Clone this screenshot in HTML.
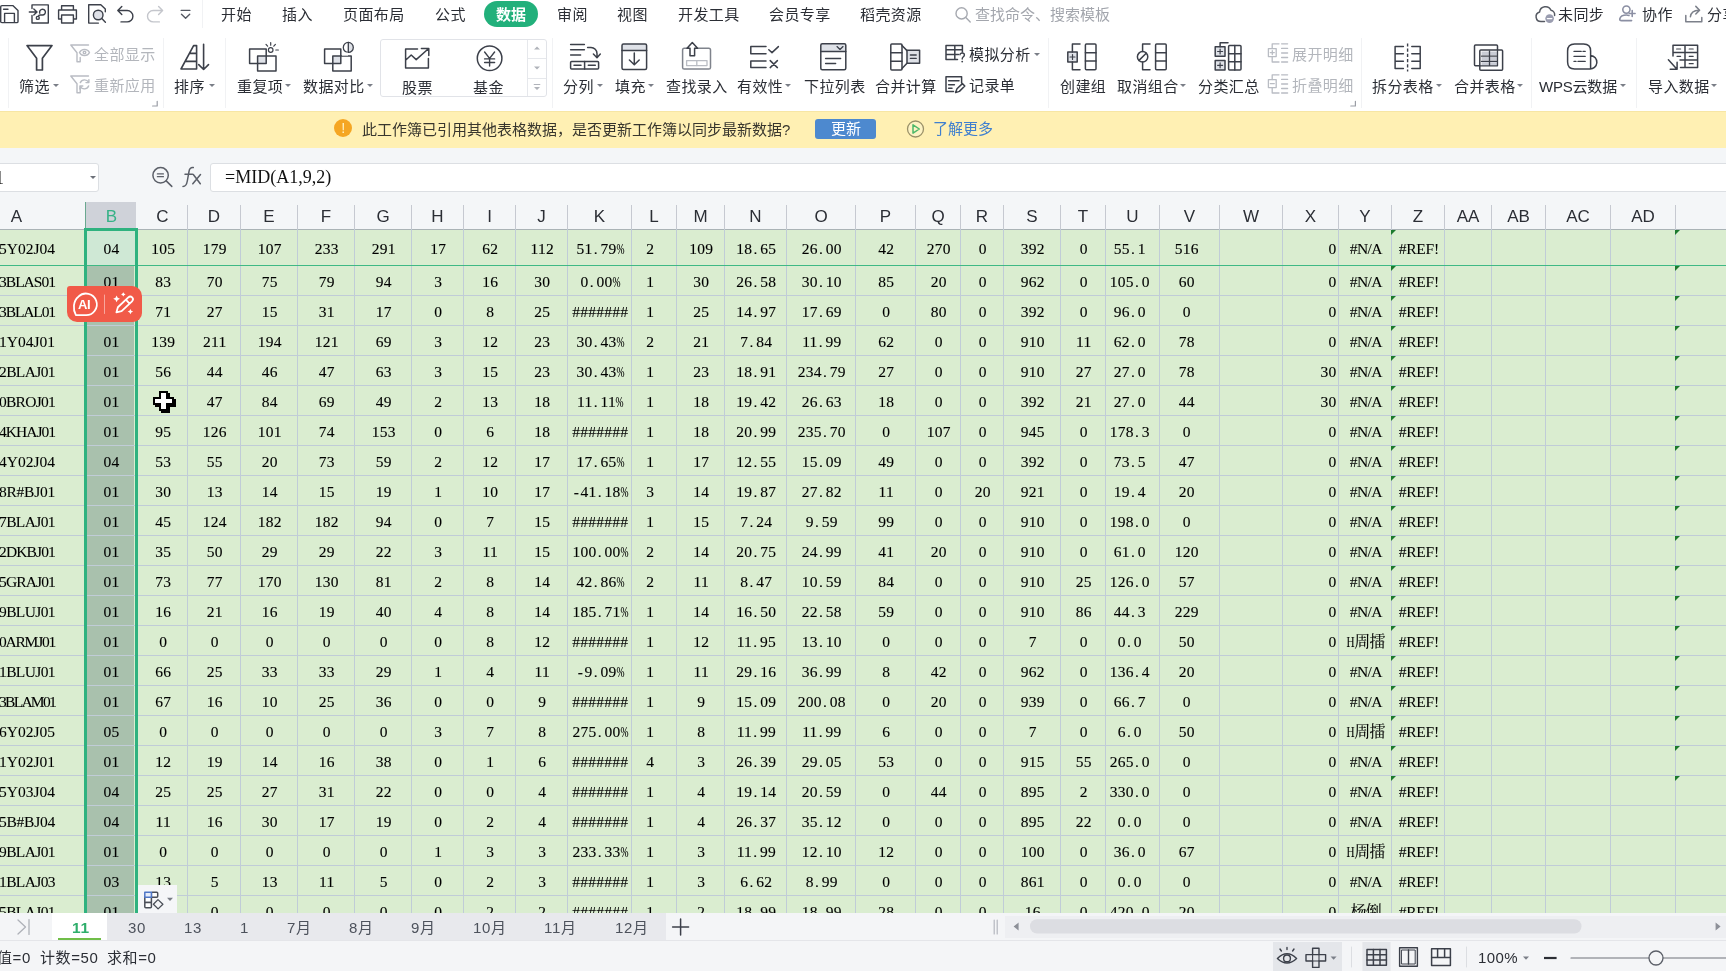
<!DOCTYPE html><html lang="zh-CN"><head><meta charset="utf-8"><title>WPS 表格</title>
<style>
*{box-sizing:border-box;margin:0;padding:0}
html,body{width:1726px;height:971px;overflow:hidden;background:#fff}
body{position:relative;font-family:"Liberation Sans","Noto Sans CJK SC",sans-serif;font-size:15px;color:#2b2e35}
.a{position:absolute;white-space:nowrap}
.t{position:absolute;white-space:nowrap;line-height:20px;height:20px;font-size:15px;color:#2b2e35}
.dis{color:#b3b6bc}
.sep{position:absolute;width:1px;background:#f1f2f4}
#root{position:absolute;left:0;top:0;width:1726px;height:971px;overflow:hidden}
.t,.r,.hd,.tab,.g{will-change:transform}
svg{position:absolute;left:0;top:0;overflow:visible}
.ar{position:absolute;width:0;height:0;border-left:3px solid transparent;border-right:3px solid transparent;border-top:3.5px solid #7a7e87}
/* grid */
#grid{position:absolute;left:0;top:229px;width:1726px;height:684px;background:#daedd0;overflow:hidden}
.vl{position:absolute;top:0;width:1px;height:684px;background:#c0ccd7}
.hl{position:absolute;left:0;height:1px;width:1726px;background:#c0ccd7}
.r{position:absolute;left:0;width:1726px;height:30px;line-height:30px;font-family:"Liberation Serif","Noto Serif CJK SC",serif;font-size:15.5px;letter-spacing:.25px;color:#000;-webkit-text-stroke:.13px #000}
.r i.n{-webkit-text-stroke:.08px #000}
.r i{position:absolute;top:1px;padding-left:1.6px;font-style:normal;text-align:center;white-space:nowrap}
.r u{text-decoration:none;padding:0 2.6px 0 1.2px}
.r s{text-decoration:none;display:inline-block;transform:scaleX(.62);margin:0 -3px 0 -2.6px}
.r b{font-weight:normal;padding:0 1.3px}
.r i.k{font-size:16px;letter-spacing:-.6px}
.r em{font-style:normal;display:inline-block;transform:scaleX(.72);margin:0 -1.2px 0 -1.8px;font-size:15.5px}
.tri{position:absolute;width:0;height:0;border-top:5px solid #1c7a2e;border-right:5px solid transparent}
.hd{position:absolute;top:202.5px;height:27px;line-height:27px;text-align:center;font-size:17px;color:#2b2e35}
.hs{position:absolute;top:205px;width:1px;height:24px;background:#c6c9d1}
.tab{position:absolute;top:913.5px;height:28px;line-height:28px;font-size:15px;letter-spacing:.7px;color:#4d525c;white-space:nowrap}
.c0{left:-52px;width:137px}.c1{left:86px;width:51px}.c2{left:138px;width:49px}.c3{left:188px;width:52px}.c4{left:241px;width:56px}.c5{left:298px;width:56px}.c6{left:355px;width:56px}.c7{left:412px;width:51px}.c8{left:464px;width:51px}.c9{left:516px;width:51px}.c10{left:568px;width:63px}.c11{left:632px;width:44px}.c12{left:677px;width:47px}.c13{left:725px;width:61px}.c14{left:787px;width:68px}.c15{left:856px;width:59px}.c16{left:916px;width:44px}.c17{left:961px;width:42px}.c18{left:1004px;width:56px}.c19{left:1061px;width:44px}.c20{left:1106px;width:53px}.c21{left:1160px;width:59px}.c22{left:1220px;width:62px}.c23{left:1283px;width:55px}.c24{left:1339px;width:52px}.c25{left:1392px;width:52px}.c26{left:1445px;width:46px}.c27{left:1492px;width:53px}.c28{left:1546px;width:64px}.c29{left:1611px;width:64px}.c30{left:1676px;width:124px}</style></head><body><div id="root">
<div class="a" style="left:0;top:0;width:1726px;height:111px;background:#fff"></div>
<div class="sep" style="left:202px;top:0;height:28px"></div>
<div class="t " style="left:221px;top:4.5px;letter-spacing:.4px;">开始</div>
<div class="t " style="left:282px;top:4.5px;letter-spacing:.4px;">插入</div>
<div class="t " style="left:343px;top:4.5px;letter-spacing:.4px;">页面布局</div>
<div class="t " style="left:434.5px;top:4.5px;letter-spacing:.4px;">公式</div>
<div class="t " style="left:556.5px;top:4.5px;letter-spacing:.4px;">审阅</div>
<div class="t " style="left:617px;top:4.5px;letter-spacing:.4px;">视图</div>
<div class="t " style="left:677.5px;top:4.5px;letter-spacing:.4px;">开发工具</div>
<div class="t " style="left:769px;top:4.5px;letter-spacing:.4px;">会员专享</div>
<div class="t " style="left:859.5px;top:4.5px;letter-spacing:.4px;">稻壳资源</div>
<div class="a" style="left:484px;top:1px;width:54px;height:26px;border-radius:13px;background:#22b07b"></div>
<div class="t " style="left:496px;top:4.5px;color:#fff;font-weight:bold">数据</div>
<div class="t " style="left:975px;top:4.5px;color:#a3a6ad">查找命令、搜索模板</div>
<div class="t " style="left:1558px;top:4.5px;letter-spacing:.4px;">未同步</div>
<div class="t " style="left:1641.5px;top:4.5px;letter-spacing:.4px;">协作</div>
<div class="t " style="left:1707px;top:4.5px;letter-spacing:.4px;">分享</div>
<div class="t " style="left:19px;top:76.5px;letter-spacing:.4px;">筛选</div>
<div class="ar" style="left:53px;top:84px;"></div>
<div class="t " style="left:174px;top:76.5px;letter-spacing:.4px;">排序</div>
<div class="ar" style="left:208.5px;top:84px;"></div>
<div class="t " style="left:236.5px;top:76.5px;letter-spacing:.4px;">重复项</div>
<div class="ar" style="left:285px;top:84px;"></div>
<div class="t " style="left:303px;top:76.5px;letter-spacing:.4px;">数据对比</div>
<div class="ar" style="left:367px;top:84px;"></div>
<div class="t " style="left:563px;top:76.5px;letter-spacing:.4px;">分列</div>
<div class="ar" style="left:597px;top:84px;"></div>
<div class="t " style="left:614.5px;top:76.5px;letter-spacing:.4px;">填充</div>
<div class="ar" style="left:648px;top:84px;"></div>
<div class="t " style="left:665.5px;top:76.5px;letter-spacing:.4px;">查找录入</div>
<div class="t " style="left:736.5px;top:76.5px;letter-spacing:.4px;">有效性</div>
<div class="ar" style="left:785px;top:84px;"></div>
<div class="t " style="left:804px;top:76.5px;letter-spacing:.4px;">下拉列表</div>
<div class="t " style="left:874.5px;top:76.5px;letter-spacing:.4px;">合并计算</div>
<div class="t " style="left:1059.5px;top:76.5px;letter-spacing:.4px;">创建组</div>
<div class="t " style="left:1116.5px;top:76.5px;letter-spacing:.4px;">取消组合</div>
<div class="ar" style="left:1180px;top:84px;"></div>
<div class="t " style="left:1197.5px;top:76.5px;letter-spacing:.4px;">分类汇总</div>
<div class="t " style="left:1372px;top:76.5px;letter-spacing:.4px;">拆分表格</div>
<div class="ar" style="left:1436px;top:84px;"></div>
<div class="t " style="left:1454px;top:76.5px;letter-spacing:.4px;">合并表格</div>
<div class="ar" style="left:1517px;top:84px;"></div>
<div class="t " style="left:1647.5px;top:76.5px;letter-spacing:.4px;">导入数据</div>
<div class="ar" style="left:1711px;top:84px;"></div>
<div class="t " style="left:1539px;top:76.5px;letter-spacing:-.2px">WPS云数据</div>
<div class="ar" style="left:1620px;top:84px;"></div>
<div class="t " style="left:401.5px;top:77.5px;letter-spacing:.4px;">股票</div>
<div class="t " style="left:473px;top:77.5px;letter-spacing:.4px;">基金</div>
<div class="t dis" style="left:93.5px;top:45px;letter-spacing:.4px;">全部显示</div>
<div class="t dis" style="left:93.5px;top:75.5px;letter-spacing:.4px;">重新应用</div>
<div class="t " style="left:968.5px;top:45px;letter-spacing:.4px;">模拟分析</div>
<div class="ar" style="left:1034px;top:52.5px;"></div>
<div class="t " style="left:968.5px;top:75.5px;letter-spacing:.4px;">记录单</div>
<div class="t dis" style="left:1291.5px;top:45px;letter-spacing:.4px;">展开明细</div>
<div class="t dis" style="left:1291.5px;top:75.5px;letter-spacing:.4px;">折叠明细</div>
<div class="sep" style="left:8px;top:38px;height:70px"></div>
<div class="sep" style="left:163px;top:38px;height:70px"></div>
<div class="sep" style="left:225px;top:38px;height:70px"></div>
<div class="sep" style="left:552px;top:38px;height:70px"></div>
<div class="sep" style="left:1048px;top:38px;height:70px"></div>
<div class="sep" style="left:1361px;top:38px;height:70px"></div>
<div class="sep" style="left:1531px;top:38px;height:70px"></div>
<div class="sep" style="left:1636px;top:38px;height:70px"></div>
<div class="a" style="left:380px;top:39px;width:167px;height:58px;border:1px solid #e1e3e8;border-radius:3px"></div>
<div class="a" style="left:527px;top:40px;width:1px;height:56px;background:#e6e8ec"></div>
<div class="a" style="left:528px;top:58px;width:18px;height:1px;background:#e6e8ec"></div>
<div class="a" style="left:528px;top:78px;width:18px;height:1px;background:#e6e8ec"></div>
<svg width="1726" height="111" viewBox="0 0 1726 111" fill="none" stroke="#3c404a" stroke-width="1.5" stroke-linejoin="round" stroke-linecap="round"><g stroke-width="1.4"><path d="M2 5.6 H12.8 L18 10.6 V21.4 Q18 22.6 16.8 22.6 H2 Q0.7 22.6 0.7 21.4 V6.8 Q0.7 5.6 2 5.6 M4.6 22.6 V13.4 H14.4 V22.6 M3.6 9.2 H8"/><path d="M32 8.6 V4.9 H48.3 V23 H32 V15.4 M29.3 12 H36.8 M33.8 8.9 L37 12 L33.8 15.1"/><path d="M39.8 13.2 A2.9 2.9 0 1 1 42.6 15 H40.2 Q38.6 15 38.4 16.4"/><circle cx="37.8" cy="17.9" r="1.5"/><path d="M61.6 10 V5.8 H73.4 V10 M61.6 19 H58.6 V10 H76.4 V19 H73.4 M61.6 15 H73.4 V23 H61.6 Z"/><path d="M98.4 23.1 H88.7 V4.7 H100.8 L105.3 9 V11.8"/><circle cx="98.2" cy="15" r="4.8" fill="#dfe1e8"/><path d="M101.8 18.6 L105.4 22.2"/><path d="M121.8 6.4 L117.8 10.5 L121.8 14.6 M118 10.5 H127.2 A5.7 5.7 0 0 1 127.2 21.9 H121"/><path stroke="#c4c6cc" d="M158.6 6.4 L162.6 10.5 L158.6 14.6 M162.4 10.5 H153.2 A5.7 5.7 0 0 0 153.2 21.9 H159.4"/><path stroke="#555962" d="M181.2 10.4 H189.9 M181.5 14.3 L185.6 18.2 L189.7 14.3"/></g><path stroke-width="1.7" d="M27 45.6 H52 L42.4 58.2 V70 H36.6 V58.2 Z"/><g stroke="#b9bcc3" stroke-width="1.4"><path d="M88.5 45 H70.8 L77 52.8 V61.8 H80.2 V57.5"/><path d="M79.5 52.5 C81.5 48.3 87.5 48.3 89.5 52.5 C87.5 56.7 81.5 56.7 79.5 52.5 Z"/><circle cx="84.5" cy="52.5" r="1.3"/></g><g stroke="#b9bcc3" stroke-width="1.4"><path d="M88.5 76 H70.8 L77 83.8 V92.8 H80.2 V88.5"/><path d="M88.6 82.3 A4.6 4.6 0 0 0 80.3 82.6 M80.2 86.2 A4.6 4.6 0 0 0 88.6 86 M88.9 79.6 V82.6 H86 M79.9 89 V86 H82.8"/></g><path stroke="#9a9da5" stroke-width="1.2" d="M157.2 101.3 V106 H152.6"/><path stroke="#9a9da5" stroke-width="1.2" d="M1355.4 101.3 V106 H1350.8"/><path stroke-width="1.6" d="M181 69 L193.6 45.6 H196.6 V69 Z M189.4 53.4 H196.6 M185.2 61.4 H196.6 M203.6 44.2 V69.4 M198.7 64.6 L203.6 69.5 L208.5 64.6"/><rect x="257.6" y="56" width="8.6" height="7.4" fill="#dfe2e8" stroke="none"/><rect x="249.6" y="48.9" width="16.6" height="14.5"/><rect x="257.6" y="56" width="18.4" height="15"/><g stroke-width="1.2"><circle cx="270.7" cy="50" r="2.3"/><path d="M270.7 42.6 V45.2 M266 44.4 L267.6 46.2 M275.4 44.4 L273.8 46.2 M275.8 50 H278.4"/></g><rect x="332.8" y="56" width="8" height="7.4" fill="#dfe2e8" stroke="none"/><rect x="324.6" y="48.9" width="16.2" height="14.5"/><rect x="332.8" y="56" width="18.4" height="15"/><path d="M348.3 42.4 A5 5 0 0 1 348.3 52.4 Z" fill="#dfe2e8" stroke="none"/><circle cx="348.3" cy="47.4" r="5" fill="none" stroke-width="1.3"/><path stroke-width="1.3" d="M348.3 42.4 V52.4"/><rect x="342" y="52.6" width="6" height="3" fill="#fff" stroke="none"/><path d="M417.5 49 H405.6 V68 H428.4 V58.5 M405.6 60.3 L411.2 55 L416.2 59.6 L428.4 48.8 M421.4 48.4 H428.8 V55.6"/><circle cx="489.6" cy="58.3" r="12.3"/><path stroke-width="1.4" d="M484.6 52 L489.6 58.4 L494.6 52 M489.6 58.4 V66 M484.6 58.9 H494.6 M484.6 62.5 H494.6"/><path fill="#b0b3ba" stroke="none" d="M534 49.5 L537 46.5 L540 49.5 Z M534 66.5 L537 69.5 L540 66.5 Z M534 87 L537 90 L540 87 Z"/><path stroke="#b0b3ba" stroke-width="1.2" d="M534.2 84.5 H539.8"/><path d="M570.6 44.6 H584.4 M570.6 49.8 H584.4 M570.6 55 H580.6 M587.6 47.4 H591 A6 6 0 0 1 597 53.4 V57 M593.4 54 L597 57.7 L600.3 54"/><rect x="570.6" y="61.6" width="28" height="7.4" rx="1"/><path d="M584.6 61.6 V69 M574 65.3 H581 M588.3 65.3 H595.3"/><rect x="622" y="44" width="24.6" height="6.4" fill="#dfe2e8" stroke="none"/><rect x="622" y="44" width="24.6" height="25.6" rx="1.5"/><path d="M622 50.4 H646.6 M634.3 53 V64.6 M629.4 60 L634.3 64.8 L639.2 60"/><path stroke="#7f838c" d="M687 48.2 H684.3 Q682.6 48.2 682.6 50 V67.4 Q682.6 69 684.3 69 H708.8 Q710.5 69 710.5 67.4 V50 Q710.5 48.2 708.8 48.2 H698"/><path d="M692.3 42.5 L697.6 48.3 H694.6 V55.8 H690 V48.3 H687 Z"/><rect x="686.6" y="60.6" width="20.4" height="5" stroke="#b9bcc3" stroke-width="1.3"/><path stroke="#b9bcc3" stroke-width="1.3" d="M696.8 60.6 V65.6"/><path d="M766 46.4 H750.8 V53.8 H766 M766 61 H750.8 V67.4 H766 M768.8 49.8 L772 52.6 L778.4 46.6 M770.2 60.6 L777.4 67.6 M777.4 60.6 L770.2 67.6"/><rect x="820.8" y="43.8" width="25" height="7.8" fill="#dfe2e8" stroke="none"/><rect x="820.8" y="43.8" width="25" height="26" rx="1.5"/><path d="M820.8 51.6 H845.8 M825.6 58.4 H840.6 M825.6 63.6 H835.6"/><path stroke-width="1.3" d="M837 46.6 L840 49.4 L843 46.6"/><rect x="890.8" y="44" width="11.2" height="26" rx="1"/><path d="M890.8 52.7 H902 M890.8 61.3 H902 M902 45.5 L907 50.6 M902 68.5 L907 63.2"/><rect x="907" y="50.2" width="12.6" height="13" fill="#dfe2e8"/><path stroke-width="1.4" d="M910.4 55 H916.2 M910.4 58.4 H916.2"/><path d="M962.4 52 V45.4 H946 V59.4 H957.5 M946 49.8 H962.4 M946 54.4 H958.5 M954.8 45.4 V59.4"/><path stroke-width="1.4" d="M960 54.8 C960 52.4 964.4 52.4 964.4 55 C964.4 56.8 962.2 56.8 962.2 59"/><circle cx="962.2" cy="61.6" r=".9" fill="#3c404a" stroke="none"/><path d="M961.6 83 V76.8 H946 V91.4 H953.5 M948.6 80.8 H959 M948.6 84.8 H954.4 M948.6 88.2 H952"/><path d="M955.6 92.6 L957 88.8 L962.4 83.6 L964.8 86 L959.4 91.4 Z"/><rect x="1067.8" y="52" width="9.4" height="10" fill="#dfe2e8"/><path stroke-width="1.2" d="M1070 57 H1075 M1072.5 54.5 V59.5"/><path d="M1080 44 H1072.4 V52 M1072.4 62 V69.7 H1080"/><rect x="1085.4" y="44" width="10.6" height="25.7" rx="1"/><path d="M1085.4 52.7 H1096 M1085.4 61 H1096"/><circle cx="1142.6" cy="56.8" r="5.2"/><path d="M1139 60.4 L1146.2 53.2"/><path d="M1150 44 H1142.6 V51.6 M1142.6 62 V69.7 H1150"/><rect x="1155.6" y="44" width="10.6" height="25.7" rx="1"/><path d="M1155.6 52.7 H1166.2 M1155.6 61 H1166.2"/><rect x="1215.2" y="46.8" width="9.8" height="9.4" fill="#dfe2e8"/><rect x="1215.2" y="60.6" width="9.8" height="9.4" fill="#dfe2e8"/><path stroke-width="1.2" d="M1217.6 51.5 H1222.6 M1220.1 49 V54 M1217.6 65.3 H1222.6 M1220.1 62.8 V67.8"/><path d="M1220.1 46.8 V42.8 H1228"/><rect x="1228.6" y="45.4" width="12.4" height="24.6" rx="1"/><path d="M1234.8 45.4 V70 M1228.6 53.7 H1241 M1228.6 61.8 H1241"/><g stroke="#b9bcc3" stroke-width="1.3"><rect x="1268.4" y="48.6" width="7.8" height="8"/><path d="M1279 43.8 H1272.2 V48.6 M1272.2 56.6 V62 H1279 M1281.6 43.8 H1287.6 M1281.6 48.4 H1287.6 M1281.6 53 H1287.6 M1281.6 57.5 H1287.6 M1281.6 62 H1287.6 M1270.3 52.6 H1274.3 M1272.3 50.6 V54.6"/></g><g stroke="#b9bcc3" stroke-width="1.3"><rect x="1268.4" y="79.6" width="7.8" height="8"/><path d="M1279 74.8 H1272.2 V79.6 M1272.2 87.6 V93 H1279 M1281.6 74.8 H1287.6 M1281.6 79.4 H1287.6 M1281.6 84 H1287.6 M1281.6 88.5 H1287.6 M1281.6 93 H1287.6 M1270.3 83.6 H1274.3"/></g><path d="M1403.4 46.4 H1395.1 V68.6 H1403.4 M1395.1 53.8 H1403.4 M1395.1 61.2 H1403.4 M1411.8 46.4 H1420.2 V68.6 H1411.8 M1411.8 53.8 H1420.2 M1411.8 61.2 H1420.2"/><path stroke-width="1.4" stroke-dasharray="3.2 2" stroke-linecap="butt" d="M1407.6 43.4 V71.6"/><rect x="1474.5" y="45" width="23" height="20.8" rx="1"/><rect x="1479.8" y="50" width="22.8" height="20.3" rx="1" fill="#fff"/><path fill="#c9ccd5" stroke="none" d="M1481.5 51.6 H1497.5 V55.4 H1481.5 Z M1481.5 57 H1497.5 V60.6 H1481.5 Z M1481.5 62.2 H1497.5 V65.6 H1481.5 Z"/><path stroke-width="1.3" d="M1481.5 56.2 H1497.5 M1481.5 61.4 H1497.5 M1489.5 51 V65.8 M1497.5 50.4 V65.8 H1480.2"/><path d="M1590.6 55.4 V51 Q1590.6 44 1583.6 44 H1574.6 Q1567.6 44 1567.6 51 V62 Q1567.6 69 1574.6 69 H1589.5 A6.8 6.8 0 0 0 1590.6 55.4 V69"/><path stroke-width="1.3" d="M1574 51.4 H1581.2 M1583 51.4 H1585.2 M1574 56.4 H1585.2 M1574 61.4 H1576 M1578 61.4 H1585.2"/><path d="M1673 56 V45.2 H1697.6 V67.4 H1680.5 M1685 45.2 V67.4 M1673 52.6 H1697.6 M1680 60 H1697.6"/><path stroke-width="1.2" d="M1676.6 49 H1680.6 M1689.2 49 H1693.2 M1689.2 56.3 H1693.2 M1689.2 63.7 H1693.2 M1677 56.3 H1680.6"/><path d="M1668.4 59.8 L1677 69.2 M1670.2 69.3 H1677.1 V62.2"/><g stroke="#a6a9b0" stroke-width="1.4"><circle cx="961.6" cy="13.4" r="5.6"/><path d="M965.8 17.6 L970.2 22"/></g><path stroke="#555962" d="M1544.5 21.6 H1541 A4.9 4.9 0 0 1 1539.6 12 A6 6 0 0 1 1551 10.2 A4.6 4.6 0 0 1 1554.6 15.4"/><circle cx="1549.6" cy="18.6" r="4.3" fill="#9a9db0" stroke="none"/><path stroke="#fff" stroke-width="1.4" d="M1547.4 18.6 H1551.8"/><g stroke="#8b8fa3" stroke-width="1.6"><circle cx="1626.4" cy="9.6" r="3.6"/><path d="M1631.6 20.6 H1621.6 Q1619.4 20.6 1619.8 18.8 Q1620.8 15 1626.4 15 Q1628 15 1629 15.4 M1632.2 10.6 V16.4 M1629.3 13.5 H1635.1"/></g><g stroke="#7c808a"><path d="M1685.8 15.6 V21.8 H1701.8 V17.6 M1690.4 16.8 Q1691 10.4 1699 10.2 M1695.8 6.4 L1699.6 10.2 L1695.8 14"/></g></svg>
<div class="a" style="left:0;top:111px;width:1726px;height:37px;background:#fff0b3;border-top:1px solid #f7e6a4"></div>
<div class="a g" style="left:334.2px;top:119px;width:18.4px;height:18.4px;border-radius:9.2px;background:#f5a623;color:#fff3c4;font-size:14.5px;line-height:18px;text-align:center">!</div>
<div class="t " style="left:362px;top:119.5px;color:#38362e">此工作簿已引用其他表格数据，是否更新工作簿以同步最新数据?</div>
<div class="a" style="left:815px;top:118.5px;width:61px;height:20.5px;border-radius:3px;background:#4d89cf"></div>
<div class="t " style="left:830.5px;top:119px;color:#fff">更新</div>
<div class="t " style="left:933px;top:119px;color:#3f7fcf">了解更多</div>
<svg width="1726" height="160" viewBox="0 0 1726 160"><circle cx="915.5" cy="129" r="8" fill="#fdf3c4" stroke="#9a9068" stroke-width="1.3"/><path d="M913 124.8 L919.3 129 L913 133.2 Z" fill="none" stroke="#4cb86a" stroke-width="1.5" stroke-linejoin="round"/></svg>
<div class="a" style="left:0;top:148px;width:1726px;height:81px;background:#f4f6f8"></div>
<div class="a" style="left:-4px;top:163px;width:103px;height:29px;background:#fff;border:1px solid #dcdfe3;border-radius:3px"></div>
<div class="a g" style="left:-5px;top:166px;font-family:'Liberation Serif',serif;font-size:18px;line-height:24px;color:#222">1</div>
<div class="ar" style="left:89.5px;top:176px;border-top-color:#6c7079;"></div>
<div class="a" style="left:210px;top:163px;width:1530px;height:29px;background:#fff;border:1px solid #dcdfe3;border-radius:3px"></div>
<div class="a g" style="left:224.5px;top:165px;font-family:'Liberation Serif',serif;font-size:18px;line-height:24px;color:#111">=MID(A1,9,2)</div>
<svg width="260" height="200" viewBox="0 0 260 200" fill="none" stroke="#5b5f68" stroke-width="1.5" stroke-linecap="round"><circle cx="160.6" cy="175.3" r="7.7"/><path d="M166.2 180.9 L171.8 186.4"/><path d="M157.4 173.9 H163.4 M157.4 176.7 H163.4" stroke-width="1.3"/><path d="M183 186.5 C186 186.5 186.8 184 187.3 181 L189 171.5 C189.5 168.5 190.8 167.3 193.3 167.6 M185 174.3 H192.5" stroke-width="1.5"/><path d="M193.3 174.5 L200.3 183.8 M200.5 174.5 L192.8 183.8" stroke-width="1.5"/></svg>
<div class="a" style="left:86px;top:202px;width:50.3px;height:27px;background:#cfd2d9"></div>
<div class="a" style="left:85px;top:202px;width:1px;height:27px;background:#6aa890"></div>
<div class="hd" style="left:-52px;width:137px;">A</div>
<div class="hd" style="left:86px;width:51px;color:#36b287;">B</div>
<div class="hd" style="left:138px;width:49px;">C</div>
<div class="hd" style="left:188px;width:52px;">D</div>
<div class="hd" style="left:241px;width:56px;">E</div>
<div class="hd" style="left:298px;width:56px;">F</div>
<div class="hd" style="left:355px;width:56px;">G</div>
<div class="hd" style="left:412px;width:51px;">H</div>
<div class="hd" style="left:464px;width:51px;">I</div>
<div class="hd" style="left:516px;width:51px;">J</div>
<div class="hd" style="left:568px;width:63px;">K</div>
<div class="hd" style="left:632px;width:44px;">L</div>
<div class="hd" style="left:677px;width:47px;">M</div>
<div class="hd" style="left:725px;width:61px;">N</div>
<div class="hd" style="left:787px;width:68px;">O</div>
<div class="hd" style="left:856px;width:59px;">P</div>
<div class="hd" style="left:916px;width:44px;">Q</div>
<div class="hd" style="left:961px;width:42px;">R</div>
<div class="hd" style="left:1004px;width:56px;">S</div>
<div class="hd" style="left:1061px;width:44px;">T</div>
<div class="hd" style="left:1106px;width:53px;">U</div>
<div class="hd" style="left:1160px;width:59px;">V</div>
<div class="hd" style="left:1220px;width:62px;">W</div>
<div class="hd" style="left:1283px;width:55px;">X</div>
<div class="hd" style="left:1339px;width:52px;">Y</div>
<div class="hd" style="left:1392px;width:52px;">Z</div>
<div class="hd" style="left:1445px;width:46px;">AA</div>
<div class="hd" style="left:1492px;width:53px;">AB</div>
<div class="hd" style="left:1546px;width:64px;">AC</div>
<div class="hd" style="left:1611px;width:64px;">AD</div>
<div class="hs" style="left:187px"></div>
<div class="hs" style="left:240px"></div>
<div class="hs" style="left:297px"></div>
<div class="hs" style="left:354px"></div>
<div class="hs" style="left:411px"></div>
<div class="hs" style="left:463px"></div>
<div class="hs" style="left:515px"></div>
<div class="hs" style="left:567px"></div>
<div class="hs" style="left:631px"></div>
<div class="hs" style="left:676px"></div>
<div class="hs" style="left:724px"></div>
<div class="hs" style="left:786px"></div>
<div class="hs" style="left:855px"></div>
<div class="hs" style="left:915px"></div>
<div class="hs" style="left:960px"></div>
<div class="hs" style="left:1003px"></div>
<div class="hs" style="left:1060px"></div>
<div class="hs" style="left:1105px"></div>
<div class="hs" style="left:1159px"></div>
<div class="hs" style="left:1219px"></div>
<div class="hs" style="left:1282px"></div>
<div class="hs" style="left:1338px"></div>
<div class="hs" style="left:1391px"></div>
<div class="hs" style="left:1444px"></div>
<div class="hs" style="left:1491px"></div>
<div class="hs" style="left:1545px"></div>
<div class="hs" style="left:1610px"></div>
<div class="hs" style="left:1675px"></div>
<div id="grid">
<div class="hl" style="top:0;background:#aab3b6;z-index:0"></div>
<div class="a" style="left:86px;top:0;width:51px;height:36px;background:#cfe8d5"></div>
<div class="a" style="left:87px;top:37px;width:47px;height:650px;background:#a9c1ad"></div>
<div class="vl" style="left:85px"></div>
<div class="vl" style="left:137px"></div>
<div class="vl" style="left:187px"></div>
<div class="vl" style="left:240px"></div>
<div class="vl" style="left:297px"></div>
<div class="vl" style="left:354px"></div>
<div class="vl" style="left:411px"></div>
<div class="vl" style="left:463px"></div>
<div class="vl" style="left:515px"></div>
<div class="vl" style="left:567px"></div>
<div class="vl" style="left:631px"></div>
<div class="vl" style="left:676px"></div>
<div class="vl" style="left:724px"></div>
<div class="vl" style="left:786px"></div>
<div class="vl" style="left:855px"></div>
<div class="vl" style="left:915px"></div>
<div class="vl" style="left:960px"></div>
<div class="vl" style="left:1003px"></div>
<div class="vl" style="left:1060px"></div>
<div class="vl" style="left:1105px"></div>
<div class="vl" style="left:1159px"></div>
<div class="vl" style="left:1219px"></div>
<div class="vl" style="left:1282px"></div>
<div class="vl" style="left:1338px"></div>
<div class="vl" style="left:1391px"></div>
<div class="vl" style="left:1444px"></div>
<div class="vl" style="left:1491px"></div>
<div class="vl" style="left:1545px"></div>
<div class="vl" style="left:1610px"></div>
<div class="vl" style="left:1675px"></div>
<div class="hl" style="top:66px"></div>
<div class="hl" style="top:96px"></div>
<div class="hl" style="top:126px"></div>
<div class="hl" style="top:156px"></div>
<div class="hl" style="top:186px"></div>
<div class="hl" style="top:216px"></div>
<div class="hl" style="top:246px"></div>
<div class="hl" style="top:276px"></div>
<div class="hl" style="top:306px"></div>
<div class="hl" style="top:336px"></div>
<div class="hl" style="top:366px"></div>
<div class="hl" style="top:396px"></div>
<div class="hl" style="top:426px"></div>
<div class="hl" style="top:456px"></div>
<div class="hl" style="top:486px"></div>
<div class="hl" style="top:516px"></div>
<div class="hl" style="top:546px"></div>
<div class="hl" style="top:576px"></div>
<div class="hl" style="top:606px"></div>
<div class="hl" style="top:636px"></div>
<div class="hl" style="top:666px"></div>
<div class="hl" style="top:696px"></div>
<div class="hl" style="top:726px"></div>
<div class="hl" style="top:36px;background:#3fb985"></div>
<div class="r" style="top:1px;height:35px;line-height:35px;"><i class="c0 n" style="text-align:left;left:-2.6px;letter-spacing:0.00px">5Y02J04</i><i class="c1" style="padding-left:0">04</i><i class="c2">105</i><i class="c3">179</i><i class="c4">107</i><i class="c5">233</i><i class="c6">291</i><i class="c7">17</i><i class="c8">62</i><i class="c9">112</i><i class="c10">51<u>.</u>79<s>%</s></i><i class="c11" style="padding-right:9px">2</i><i class="c12">109</i><i class="c13">18<u>.</u>65</i><i class="c14">26<u>.</u>00</i><i class="c15">42</i><i class="c16">270</i><i class="c17">0</i><i class="c18">392</i><i class="c19">0</i><i class="c20" style="padding-right:7px">55<u>.</u>1</i><i class="c21" style="padding-right:7px">516</i><i class="c23" style="text-align:right;padding-right:1.5px">0</i><i class="c24 n" style="letter-spacing:-0.61px">#N/A</i><i class="c25 n" style="letter-spacing:-0.27px">#REF!</i></div>
<div class="r" style="top:37px;"><i class="c0 n" style="text-align:left;left:-2.6px;letter-spacing:-0.98px">3BLAS01</i><i class="c1" style="padding-left:0">01</i><i class="c2">83</i><i class="c3">70</i><i class="c4">75</i><i class="c5">79</i><i class="c6">94</i><i class="c7">3</i><i class="c8">16</i><i class="c9">30</i><i class="c10">0<u>.</u>00<s>%</s></i><i class="c11" style="padding-right:9px">1</i><i class="c12">30</i><i class="c13">26<u>.</u>58</i><i class="c14">30<u>.</u>10</i><i class="c15">85</i><i class="c16">20</i><i class="c17">0</i><i class="c18">962</i><i class="c19">0</i><i class="c20" style="padding-right:7px">105<u>.</u>0</i><i class="c21" style="padding-right:7px">60</i><i class="c23" style="text-align:right;padding-right:1.5px">0</i><i class="c24 n" style="letter-spacing:-0.61px">#N/A</i><i class="c25 n" style="letter-spacing:-0.27px">#REF!</i></div>
<div class="r" style="top:67px;"><i class="c0 n" style="text-align:left;left:-2.6px;letter-spacing:-1.10px">3BLAL01</i><i class="c1" style="padding-left:0">01</i><i class="c2">71</i><i class="c3">27</i><i class="c4">15</i><i class="c5">31</i><i class="c6">17</i><i class="c7">0</i><i class="c8">8</i><i class="c9">25</i><i class="c10 n">#######</i><i class="c11" style="padding-right:9px">1</i><i class="c12">25</i><i class="c13">14<u>.</u>97</i><i class="c14">17<u>.</u>69</i><i class="c15">0</i><i class="c16">80</i><i class="c17">0</i><i class="c18">392</i><i class="c19">0</i><i class="c20" style="padding-right:7px">96<u>.</u>0</i><i class="c21" style="padding-right:7px">0</i><i class="c23" style="text-align:right;padding-right:1.5px">0</i><i class="c24 n" style="letter-spacing:-0.61px">#N/A</i><i class="c25 n" style="letter-spacing:-0.27px">#REF!</i></div>
<div class="r" style="top:97px;"><i class="c0 n" style="text-align:left;left:-2.6px;letter-spacing:0.00px">1Y04J01</i><i class="c1" style="padding-left:0">01</i><i class="c2">139</i><i class="c3">211</i><i class="c4">194</i><i class="c5">121</i><i class="c6">69</i><i class="c7">3</i><i class="c8">12</i><i class="c9">23</i><i class="c10">30<u>.</u>43<s>%</s></i><i class="c11" style="padding-right:9px">2</i><i class="c12">21</i><i class="c13">7<u>.</u>84</i><i class="c14">11<u>.</u>99</i><i class="c15">62</i><i class="c16">0</i><i class="c17">0</i><i class="c18">910</i><i class="c19">11</i><i class="c20" style="padding-right:7px">62<u>.</u>0</i><i class="c21" style="padding-right:7px">78</i><i class="c23" style="text-align:right;padding-right:1.5px">0</i><i class="c24 n" style="letter-spacing:-0.61px">#N/A</i><i class="c25 n" style="letter-spacing:-0.27px">#REF!</i></div>
<div class="r" style="top:127px;"><i class="c0 n" style="text-align:left;left:-2.6px;letter-spacing:-0.61px">2BLAJ01</i><i class="c1" style="padding-left:0">01</i><i class="c2">56</i><i class="c3">44</i><i class="c4">46</i><i class="c5">47</i><i class="c6">63</i><i class="c7">3</i><i class="c8">15</i><i class="c9">23</i><i class="c10">30<u>.</u>43<s>%</s></i><i class="c11" style="padding-right:9px">1</i><i class="c12">23</i><i class="c13">18<u>.</u>91</i><i class="c14">234<u>.</u>79</i><i class="c15">27</i><i class="c16">0</i><i class="c17">0</i><i class="c18">910</i><i class="c19">27</i><i class="c20" style="padding-right:7px">27<u>.</u>0</i><i class="c21" style="padding-right:7px">78</i><i class="c23" style="text-align:right;padding-right:1.5px">30</i><i class="c24 n" style="letter-spacing:-0.61px">#N/A</i><i class="c25 n" style="letter-spacing:-0.27px">#REF!</i></div>
<div class="r" style="top:157px;"><i class="c0 n" style="text-align:left;left:-2.6px;letter-spacing:-0.74px">0BROJ01</i><i class="c1" style="padding-left:0">01</i><i class="c3">47</i><i class="c4">84</i><i class="c5">69</i><i class="c6">49</i><i class="c7">2</i><i class="c8">13</i><i class="c9">18</i><i class="c10">11<u>.</u>11<s>%</s></i><i class="c11" style="padding-right:9px">1</i><i class="c12">18</i><i class="c13">19<u>.</u>42</i><i class="c14">26<u>.</u>63</i><i class="c15">18</i><i class="c16">0</i><i class="c17">0</i><i class="c18">392</i><i class="c19">21</i><i class="c20" style="padding-right:7px">27<u>.</u>0</i><i class="c21" style="padding-right:7px">44</i><i class="c23" style="text-align:right;padding-right:1.5px">30</i><i class="c24 n" style="letter-spacing:-0.61px">#N/A</i><i class="c25 n" style="letter-spacing:-0.27px">#REF!</i></div>
<div class="r" style="top:187px;"><i class="c0 n" style="text-align:left;left:-2.6px;letter-spacing:-0.98px">4KHAJ01</i><i class="c1" style="padding-left:0">01</i><i class="c2">95</i><i class="c3">126</i><i class="c4">101</i><i class="c5">74</i><i class="c6">153</i><i class="c7">0</i><i class="c8">6</i><i class="c9">18</i><i class="c10 n">#######</i><i class="c11" style="padding-right:9px">1</i><i class="c12">18</i><i class="c13">20<u>.</u>99</i><i class="c14">235<u>.</u>70</i><i class="c15">0</i><i class="c16">107</i><i class="c17">0</i><i class="c18">945</i><i class="c19">0</i><i class="c20" style="padding-right:7px">178<u>.</u>3</i><i class="c21" style="padding-right:7px">0</i><i class="c23" style="text-align:right;padding-right:1.5px">0</i><i class="c24 n" style="letter-spacing:-0.61px">#N/A</i><i class="c25 n" style="letter-spacing:-0.27px">#REF!</i></div>
<div class="r" style="top:217px;"><i class="c0 n" style="text-align:left;left:-2.6px;letter-spacing:0.00px">4Y02J04</i><i class="c1" style="padding-left:0">04</i><i class="c2">53</i><i class="c3">55</i><i class="c4">20</i><i class="c5">73</i><i class="c6">59</i><i class="c7">2</i><i class="c8">12</i><i class="c9">17</i><i class="c10">17<u>.</u>65<s>%</s></i><i class="c11" style="padding-right:9px">1</i><i class="c12">17</i><i class="c13">12<u>.</u>55</i><i class="c14">15<u>.</u>09</i><i class="c15">49</i><i class="c16">0</i><i class="c17">0</i><i class="c18">392</i><i class="c19">0</i><i class="c20" style="padding-right:7px">73<u>.</u>5</i><i class="c21" style="padding-right:7px">47</i><i class="c23" style="text-align:right;padding-right:1.5px">0</i><i class="c24 n" style="letter-spacing:-0.61px">#N/A</i><i class="c25 n" style="letter-spacing:-0.27px">#REF!</i></div>
<div class="r" style="top:247px;"><i class="c0 n" style="text-align:left;left:-2.6px;letter-spacing:-0.24px">8R#BJ01</i><i class="c1" style="padding-left:0">01</i><i class="c2">30</i><i class="c3">13</i><i class="c4">14</i><i class="c5">15</i><i class="c6">19</i><i class="c7">1</i><i class="c8">10</i><i class="c9">17</i><i class="c10"><b>-</b>41<u>.</u>18<s>%</s></i><i class="c11" style="padding-right:9px">3</i><i class="c12">14</i><i class="c13">19<u>.</u>87</i><i class="c14">27<u>.</u>82</i><i class="c15">11</i><i class="c16">0</i><i class="c17">20</i><i class="c18">921</i><i class="c19">0</i><i class="c20" style="padding-right:7px">19<u>.</u>4</i><i class="c21" style="padding-right:7px">20</i><i class="c23" style="text-align:right;padding-right:1.5px">0</i><i class="c24 n" style="letter-spacing:-0.61px">#N/A</i><i class="c25 n" style="letter-spacing:-0.27px">#REF!</i></div>
<div class="r" style="top:277px;"><i class="c0 n" style="text-align:left;left:-2.6px;letter-spacing:-0.61px">7BLAJ01</i><i class="c1" style="padding-left:0">01</i><i class="c2">45</i><i class="c3">124</i><i class="c4">182</i><i class="c5">182</i><i class="c6">94</i><i class="c7">0</i><i class="c8">7</i><i class="c9">15</i><i class="c10 n">#######</i><i class="c11" style="padding-right:9px">1</i><i class="c12">15</i><i class="c13">7<u>.</u>24</i><i class="c14">9<u>.</u>59</i><i class="c15">99</i><i class="c16">0</i><i class="c17">0</i><i class="c18">910</i><i class="c19">0</i><i class="c20" style="padding-right:7px">198<u>.</u>0</i><i class="c21" style="padding-right:7px">0</i><i class="c23" style="text-align:right;padding-right:1.5px">0</i><i class="c24 n" style="letter-spacing:-0.61px">#N/A</i><i class="c25 n" style="letter-spacing:-0.27px">#REF!</i></div>
<div class="r" style="top:307px;"><i class="c0 n" style="text-align:left;left:-2.6px;letter-spacing:-0.86px">2DKBJ01</i><i class="c1" style="padding-left:0">01</i><i class="c2">35</i><i class="c3">50</i><i class="c4">29</i><i class="c5">29</i><i class="c6">22</i><i class="c7">3</i><i class="c8">11</i><i class="c9">15</i><i class="c10">100<u>.</u>00<s>%</s></i><i class="c11" style="padding-right:9px">2</i><i class="c12">14</i><i class="c13">20<u>.</u>75</i><i class="c14">24<u>.</u>99</i><i class="c15">41</i><i class="c16">20</i><i class="c17">0</i><i class="c18">910</i><i class="c19">0</i><i class="c20" style="padding-right:7px">61<u>.</u>0</i><i class="c21" style="padding-right:7px">120</i><i class="c23" style="text-align:right;padding-right:1.5px">0</i><i class="c24 n" style="letter-spacing:-0.61px">#N/A</i><i class="c25 n" style="letter-spacing:-0.27px">#REF!</i></div>
<div class="r" style="top:337px;"><i class="c0 n" style="text-align:left;left:-2.6px;letter-spacing:-0.86px">5GRAJ01</i><i class="c1" style="padding-left:0">01</i><i class="c2">73</i><i class="c3">77</i><i class="c4">170</i><i class="c5">130</i><i class="c6">81</i><i class="c7">2</i><i class="c8">8</i><i class="c9">14</i><i class="c10">42<u>.</u>86<s>%</s></i><i class="c11" style="padding-right:9px">2</i><i class="c12">11</i><i class="c13">8<u>.</u>47</i><i class="c14">10<u>.</u>59</i><i class="c15">84</i><i class="c16">0</i><i class="c17">0</i><i class="c18">910</i><i class="c19">25</i><i class="c20" style="padding-right:7px">126<u>.</u>0</i><i class="c21" style="padding-right:7px">57</i><i class="c23" style="text-align:right;padding-right:1.5px">0</i><i class="c24 n" style="letter-spacing:-0.61px">#N/A</i><i class="c25 n" style="letter-spacing:-0.27px">#REF!</i></div>
<div class="r" style="top:367px;"><i class="c0 n" style="text-align:left;left:-2.6px;letter-spacing:-0.61px">9BLUJ01</i><i class="c1" style="padding-left:0">01</i><i class="c2">16</i><i class="c3">21</i><i class="c4">16</i><i class="c5">19</i><i class="c6">40</i><i class="c7">4</i><i class="c8">8</i><i class="c9">14</i><i class="c10">185<u>.</u>71<s>%</s></i><i class="c11" style="padding-right:9px">1</i><i class="c12">14</i><i class="c13">16<u>.</u>50</i><i class="c14">22<u>.</u>58</i><i class="c15">59</i><i class="c16">0</i><i class="c17">0</i><i class="c18">910</i><i class="c19">86</i><i class="c20" style="padding-right:7px">44<u>.</u>3</i><i class="c21" style="padding-right:7px">229</i><i class="c23" style="text-align:right;padding-right:1.5px">0</i><i class="c24 n" style="letter-spacing:-0.61px">#N/A</i><i class="c25 n" style="letter-spacing:-0.27px">#REF!</i></div>
<div class="r" style="top:397px;"><i class="c0 n" style="text-align:left;left:-2.6px;letter-spacing:-1.23px">0ARMJ01</i><i class="c1" style="padding-left:0">01</i><i class="c2">0</i><i class="c3">0</i><i class="c4">0</i><i class="c5">0</i><i class="c6">0</i><i class="c7">0</i><i class="c8">8</i><i class="c9">12</i><i class="c10 n">#######</i><i class="c11" style="padding-right:9px">1</i><i class="c12">12</i><i class="c13">11<u>.</u>95</i><i class="c14">13<u>.</u>10</i><i class="c15">0</i><i class="c16">0</i><i class="c17">0</i><i class="c18">7</i><i class="c19">0</i><i class="c20" style="padding-right:7px">0<u>.</u>0</i><i class="c21" style="padding-right:7px">50</i><i class="c23" style="text-align:right;padding-right:1.5px">0</i><i class="c24 n k"><em>H</em>周擂</i><i class="c25 n" style="letter-spacing:-0.27px">#REF!</i></div>
<div class="r" style="top:427px;"><i class="c0 n" style="text-align:left;left:-2.6px;letter-spacing:-0.61px">1BLUJ01</i><i class="c1" style="padding-left:0">01</i><i class="c2">66</i><i class="c3">25</i><i class="c4">33</i><i class="c5">33</i><i class="c6">29</i><i class="c7">1</i><i class="c8">4</i><i class="c9">11</i><i class="c10"><b>-</b>9<u>.</u>09<s>%</s></i><i class="c11" style="padding-right:9px">1</i><i class="c12">11</i><i class="c13">29<u>.</u>16</i><i class="c14">36<u>.</u>99</i><i class="c15">8</i><i class="c16">42</i><i class="c17">0</i><i class="c18">962</i><i class="c19">0</i><i class="c20" style="padding-right:7px">136<u>.</u>4</i><i class="c21" style="padding-right:7px">20</i><i class="c23" style="text-align:right;padding-right:1.5px">0</i><i class="c24 n" style="letter-spacing:-0.61px">#N/A</i><i class="c25 n" style="letter-spacing:-0.27px">#REF!</i></div>
<div class="r" style="top:457px;"><i class="c0 n" style="text-align:left;left:-2.6px;letter-spacing:-1.72px">3BLAM01</i><i class="c1" style="padding-left:0">01</i><i class="c2">67</i><i class="c3">16</i><i class="c4">10</i><i class="c5">25</i><i class="c6">36</i><i class="c7">0</i><i class="c8">0</i><i class="c9">9</i><i class="c10 n">#######</i><i class="c11" style="padding-right:9px">1</i><i class="c12">9</i><i class="c13">15<u>.</u>09</i><i class="c14">200<u>.</u>08</i><i class="c15">0</i><i class="c16">20</i><i class="c17">0</i><i class="c18">939</i><i class="c19">0</i><i class="c20" style="padding-right:7px">66<u>.</u>7</i><i class="c21" style="padding-right:7px">0</i><i class="c23" style="text-align:right;padding-right:1.5px">0</i><i class="c24 n" style="letter-spacing:-0.61px">#N/A</i><i class="c25 n" style="letter-spacing:-0.27px">#REF!</i></div>
<div class="r" style="top:487px;"><i class="c0 n" style="text-align:left;left:-2.6px;letter-spacing:0.00px">6Y02J05</i><i class="c1" style="padding-left:0">05</i><i class="c2">0</i><i class="c3">0</i><i class="c4">0</i><i class="c5">0</i><i class="c6">0</i><i class="c7">3</i><i class="c8">7</i><i class="c9">8</i><i class="c10">275<u>.</u>00<s>%</s></i><i class="c11" style="padding-right:9px">1</i><i class="c12">8</i><i class="c13">11<u>.</u>99</i><i class="c14">11<u>.</u>99</i><i class="c15">6</i><i class="c16">0</i><i class="c17">0</i><i class="c18">7</i><i class="c19">0</i><i class="c20" style="padding-right:7px">6<u>.</u>0</i><i class="c21" style="padding-right:7px">50</i><i class="c23" style="text-align:right;padding-right:1.5px">0</i><i class="c24 n k"><em>H</em>周擂</i><i class="c25 n" style="letter-spacing:-0.27px">#REF!</i></div>
<div class="r" style="top:517px;"><i class="c0 n" style="text-align:left;left:-2.6px;letter-spacing:0.00px">1Y02J01</i><i class="c1" style="padding-left:0">01</i><i class="c2">12</i><i class="c3">19</i><i class="c4">14</i><i class="c5">16</i><i class="c6">38</i><i class="c7">0</i><i class="c8">1</i><i class="c9">6</i><i class="c10 n">#######</i><i class="c11" style="padding-right:9px">4</i><i class="c12">3</i><i class="c13">26<u>.</u>39</i><i class="c14">29<u>.</u>05</i><i class="c15">53</i><i class="c16">0</i><i class="c17">0</i><i class="c18">915</i><i class="c19">55</i><i class="c20" style="padding-right:7px">265<u>.</u>0</i><i class="c21" style="padding-right:7px">0</i><i class="c23" style="text-align:right;padding-right:1.5px">0</i><i class="c24 n" style="letter-spacing:-0.61px">#N/A</i><i class="c25 n" style="letter-spacing:-0.27px">#REF!</i></div>
<div class="r" style="top:547px;"><i class="c0 n" style="text-align:left;left:-2.6px;letter-spacing:0.00px">5Y03J04</i><i class="c1" style="padding-left:0">04</i><i class="c2">25</i><i class="c3">25</i><i class="c4">27</i><i class="c5">31</i><i class="c6">22</i><i class="c7">0</i><i class="c8">0</i><i class="c9">4</i><i class="c10 n">#######</i><i class="c11" style="padding-right:9px">1</i><i class="c12">4</i><i class="c13">19<u>.</u>14</i><i class="c14">20<u>.</u>59</i><i class="c15">0</i><i class="c16">44</i><i class="c17">0</i><i class="c18">895</i><i class="c19">2</i><i class="c20" style="padding-right:7px">330<u>.</u>0</i><i class="c21" style="padding-right:7px">0</i><i class="c23" style="text-align:right;padding-right:1.5px">0</i><i class="c24 n" style="letter-spacing:-0.61px">#N/A</i><i class="c25 n" style="letter-spacing:-0.27px">#REF!</i></div>
<div class="r" style="top:577px;"><i class="c0 n" style="text-align:left;left:-2.6px;letter-spacing:-0.24px">5B#BJ04</i><i class="c1" style="padding-left:0">04</i><i class="c2">11</i><i class="c3">16</i><i class="c4">30</i><i class="c5">17</i><i class="c6">19</i><i class="c7">0</i><i class="c8">2</i><i class="c9">4</i><i class="c10 n">#######</i><i class="c11" style="padding-right:9px">1</i><i class="c12">4</i><i class="c13">26<u>.</u>37</i><i class="c14">35<u>.</u>12</i><i class="c15">0</i><i class="c16">0</i><i class="c17">0</i><i class="c18">895</i><i class="c19">22</i><i class="c20" style="padding-right:7px">0<u>.</u>0</i><i class="c21" style="padding-right:7px">0</i><i class="c23" style="text-align:right;padding-right:1.5px">0</i><i class="c24 n" style="letter-spacing:-0.61px">#N/A</i><i class="c25 n" style="letter-spacing:-0.27px">#REF!</i></div>
<div class="r" style="top:607px;"><i class="c0 n" style="text-align:left;left:-2.6px;letter-spacing:-0.61px">9BLAJ01</i><i class="c1" style="padding-left:0">01</i><i class="c2">0</i><i class="c3">0</i><i class="c4">0</i><i class="c5">0</i><i class="c6">0</i><i class="c7">1</i><i class="c8">3</i><i class="c9">3</i><i class="c10">233<u>.</u>33<s>%</s></i><i class="c11" style="padding-right:9px">1</i><i class="c12">3</i><i class="c13">11<u>.</u>99</i><i class="c14">12<u>.</u>10</i><i class="c15">12</i><i class="c16">0</i><i class="c17">0</i><i class="c18">100</i><i class="c19">0</i><i class="c20" style="padding-right:7px">36<u>.</u>0</i><i class="c21" style="padding-right:7px">67</i><i class="c23" style="text-align:right;padding-right:1.5px">0</i><i class="c24 n k"><em>H</em>周擂</i><i class="c25 n" style="letter-spacing:-0.27px">#REF!</i></div>
<div class="r" style="top:637px;"><i class="c0 n" style="text-align:left;left:-2.6px;letter-spacing:-0.61px">1BLAJ03</i><i class="c1" style="padding-left:0">03</i><i class="c2">13</i><i class="c3">5</i><i class="c4">13</i><i class="c5">11</i><i class="c6">5</i><i class="c7">0</i><i class="c8">2</i><i class="c9">3</i><i class="c10 n">#######</i><i class="c11" style="padding-right:9px">1</i><i class="c12">3</i><i class="c13">6<u>.</u>62</i><i class="c14">8<u>.</u>99</i><i class="c15">0</i><i class="c16">0</i><i class="c17">0</i><i class="c18">861</i><i class="c19">0</i><i class="c20" style="padding-right:7px">0<u>.</u>0</i><i class="c21" style="padding-right:7px">0</i><i class="c23" style="text-align:right;padding-right:1.5px">0</i><i class="c24 n" style="letter-spacing:-0.61px">#N/A</i><i class="c25 n" style="letter-spacing:-0.27px">#REF!</i></div>
<div class="r" style="top:667px;"><i class="c0 n" style="text-align:left;left:-2.6px;letter-spacing:-0.61px">5BLAJ01</i><i class="c1" style="padding-left:0">01</i><i class="c2">0</i><i class="c3">0</i><i class="c4">0</i><i class="c5">0</i><i class="c6">0</i><i class="c7">0</i><i class="c8">2</i><i class="c9">2</i><i class="c10 n">#######</i><i class="c11" style="padding-right:9px">1</i><i class="c12">2</i><i class="c13">18<u>.</u>99</i><i class="c14">18<u>.</u>99</i><i class="c15">28</i><i class="c16">0</i><i class="c17">0</i><i class="c18">16</i><i class="c19">0</i><i class="c20" style="padding-right:7px">420<u>.</u>0</i><i class="c21" style="padding-right:7px">20</i><i class="c23" style="text-align:right;padding-right:1.5px">0</i><i class="c24 n k">杨倒</i><i class="c25 n" style="letter-spacing:-0.27px">#REF!</i></div>
<div class="tri" style="left:1391px;top:1px"></div><div class="tri" style="left:1675px;top:1px"></div>
<div class="tri" style="left:1391px;top:37px"></div><div class="tri" style="left:1675px;top:37px"></div>
<div class="tri" style="left:1391px;top:67px"></div><div class="tri" style="left:1675px;top:67px"></div>
<div class="tri" style="left:1391px;top:97px"></div><div class="tri" style="left:1675px;top:97px"></div>
<div class="tri" style="left:1391px;top:127px"></div><div class="tri" style="left:1675px;top:127px"></div>
<div class="tri" style="left:1391px;top:157px"></div><div class="tri" style="left:1675px;top:157px"></div>
<div class="tri" style="left:1391px;top:187px"></div><div class="tri" style="left:1675px;top:187px"></div>
<div class="tri" style="left:1391px;top:217px"></div><div class="tri" style="left:1675px;top:217px"></div>
<div class="tri" style="left:1391px;top:247px"></div><div class="tri" style="left:1675px;top:247px"></div>
<div class="tri" style="left:1391px;top:277px"></div><div class="tri" style="left:1675px;top:277px"></div>
<div class="tri" style="left:1391px;top:307px"></div><div class="tri" style="left:1675px;top:307px"></div>
<div class="tri" style="left:1391px;top:337px"></div><div class="tri" style="left:1675px;top:337px"></div>
<div class="tri" style="left:1391px;top:367px"></div><div class="tri" style="left:1675px;top:367px"></div>
<div class="tri" style="left:1391px;top:397px"></div><div class="tri" style="left:1675px;top:397px"></div>
<div class="tri" style="left:1391px;top:427px"></div><div class="tri" style="left:1675px;top:427px"></div>
<div class="tri" style="left:1391px;top:457px"></div><div class="tri" style="left:1675px;top:457px"></div>
<div class="tri" style="left:1391px;top:487px"></div><div class="tri" style="left:1675px;top:487px"></div>
<div class="tri" style="left:1391px;top:517px"></div><div class="tri" style="left:1675px;top:517px"></div>
<div class="tri" style="left:1391px;top:547px"></div><div class="tri" style="left:1675px;top:547px"></div>
</div>
<div class="a" style="left:84px;top:228px;width:54px;height:685px;border:3px solid #2fb27f;border-bottom:none"></div>
<div class="a" style="left:67px;top:286.3px;width:75px;height:35.5px;border-radius:3px 10px 9px 10px;background:#f15a48"></div>
<svg width="200" height="340" viewBox="0 0 200 340" fill="none" stroke="#fff" stroke-width="1.8" stroke-linecap="round" stroke-linejoin="round"><path d="M75.8 314.9 C72.8 309.5 73 301 78.4 296.7 A10.8 10.8 0 1 1 85 315.1 H76 Z" /><path d="M104.5 295 V313.5" stroke="#f8a69c" stroke-width="1"/><g transform="translate(116.4 312.4) rotate(-43.5)"><path d="M0 0 L4.6 -2.7 H19 A2.7 2.7 0 0 1 19 2.7 H4.6 Z M15.6 -2.7 V2.7"/></g><path fill="#fff" stroke="none" d="M116.6 295.4 l1.1 2.3 2.3 1.1 -2.3 1.1 -1.1 2.3 -1.1 -2.3 -2.3 -1.1 2.3 -1.1z M123.3 292.2 l.8 1.4 1.4 .8 -1.4 .8 -.8 1.4 -.8 -1.4 -1.4 -.8 1.4 -.8z M130.4 308.9 l.9 1.8 1.8 .9 -1.8 .9 -.9 1.8 -.9 -1.8 -1.8 -.9 1.8 -.9z"/></svg>
<div class="a g" style="left:78.3px;top:296.6px;font-size:13px;line-height:16px;font-weight:bold;color:#fff;letter-spacing:-.3px">AI</div>
<svg width="200" height="430" viewBox="0 0 200 430" shape-rendering="crispEdges"><path fill="#000" d="M161 393 h9 v6 h6 v8 h-6 v6 h-9 v-6 h-6 v-8 h6z"/><path fill="#000" d="M159 391 h9 v6 h6 v8 h-6 v6 h-9 v-6 h-6 v-8 h6z"/><path fill="#fff" d="M161 393 h5 v6 h6 v4 h-6 v6 h-5 v-6 h-6 v-4 h6z"/></svg>
<div class="a" style="left:138px;top:885px;width:39px;height:28px;background:#f5f6f8"></div>
<svg width="200" height="915" viewBox="0 0 200 915" fill="none" stroke="#4a4e57" stroke-width="1.5" stroke-linejoin="round"><rect x="144.8" y="897.3" width="6.6" height="5.2" fill="#fff"/><rect x="144.8" y="902.5" width="6.6" height="5.2" rx="1" fill="#fff"/><rect x="151.4" y="892.2" width="6.3" height="5.1" rx="1" fill="#fff"/><rect x="144.8" y="892.2" width="6.6" height="5.1" fill="#e6edfa" stroke="#4f76c6"/><path d="M153.4 904.3 L158 899.6 L162.9 904.2 L158.1 908.9 Z" fill="#f5f6f8" stroke-width="1.3"/><path d="M167 897.8 L170 900.9 L173 897.8 Z" fill="#7a7e87" stroke="none"/></svg>
<div class="a" style="left:0;top:913px;width:1726px;height:28px;background:#f4f5f7"></div>
<div class="a" style="left:107px;top:913px;width:559px;height:28px;background:#e8e9ed"></div>
<div class="a" style="left:52px;top:913px;width:55px;height:28px;background:#fff"></div>
<div class="a" style="left:58px;top:938px;width:42.7px;height:2.3px;background:#70be48"></div>
<div class="tab" style="left:72.4px;color:#2fae6b;font-weight:bold;font-size:15.5px">11</div>
<div class="tab" style="left:128.3px">30</div>
<div class="tab" style="left:184.3px">13</div>
<div class="tab" style="left:240.3px">1</div>
<div class="tab" style="left:286.8px">7月</div>
<div class="tab" style="left:348.8px">8月</div>
<div class="tab" style="left:410.8px">9月</div>
<div class="tab" style="left:473.3px">10月</div>
<div class="tab" style="left:543.8px">11月</div>
<div class="tab" style="left:614.8px">12月</div>
<svg width="1726" height="971" viewBox="0 0 1726 971" fill="none" stroke-linecap="round" stroke-linejoin="round"><path stroke="#aeb1b8" stroke-width="1.3" d="M18 920 L25.5 927 L18 934 M29 919.6 V934.4"/><path stroke="#3c404a" stroke-width="1.5" d="M672.6 927 H688.6 M680.6 919 V935"/><rect x="1005" y="916" width="721" height="22" fill="#eeeff2" stroke="none"/><path stroke="#b4b7be" stroke-width="1.2" d="M994.2 920 V934 M997.2 920 V934"/><path fill="#8d9098" stroke="none" d="M1018.6 922.6 V930.6 L1013.6 926.6 Z M1715.6 922.6 V930.6 L1720.6 926.6 Z"/><rect x="1030" y="919.3" width="551.5" height="14.2" rx="7" fill="#dcdde2" stroke="none"/><rect x="0" y="941" width="1726" height="30" fill="#f4f5f7" stroke="none"/><rect x="0" y="940" width="1726" height="1" fill="#e4e5e9" stroke="none"/><rect x="1273" y="942" width="69" height="29" fill="#e4e6ea" stroke="none"/><rect x="1362.4" y="942" width="28.2" height="29" fill="#e4e6ea" stroke="none"/><g stroke="#3c404a" stroke-width="1.4"><path d="M1277.4 958.4 Q1287 949 1296.6 958.4 Q1287 967.6 1277.4 958.4 Z"/><circle cx="1287" cy="958.4" r="3.4"/><path d="M1287 947.4 V949.6 M1280 949 L1281.4 951 M1294 949 L1292.6 951"/></g><g stroke="#3c404a" stroke-width="1.4"><path d="M1312.6 948.2 H1319 V954.6 H1325.6 V961 H1319 V967.4 H1312.6 V961 H1306 V954.6 H1312.6 Z"/><path d="M1312.6 954.6 H1319 V961 H1312.6 Z" stroke-width="1.1"/></g><path fill="#7a7e87" stroke="none" d="M1330.6 956.4 H1336.6 L1333.6 959.8 Z"/><path stroke="#dcdee2" stroke-width="1" d="M1351.5 947 V967 M1466.5 947 V967"/><g stroke="#3c404a" stroke-width="1.5"><rect x="1367" y="949.6" width="19.4" height="15.6"/><path d="M1367 954.8 H1386.4 M1367 960 H1386.4 M1373.4 949.6 V965.2 M1380 949.6 V965.2"/></g><g stroke="#3c404a"><rect x="1399.6" y="947.8" width="17.8" height="18.4" stroke-width="1.4"/><rect x="1401.8" y="950" width="13.4" height="14" stroke-width="1"/><path d="M1408.5 950 V964" stroke-width="1.4"/></g><g stroke="#3c404a" stroke-width="1.5"><rect x="1431.6" y="948.8" width="18.8" height="16.8"/><path d="M1437.6 948.8 V957.4 H1444.6 V948.8 M1431.6 957.4 H1450.4"/></g><path fill="#7a7e87" stroke="none" d="M1523 956.4 H1529 L1526 959.8 Z"/><path stroke="#2b2e35" stroke-width="2.2" stroke-linecap="butt" d="M1544 958 H1556.6"/><path stroke="#6e727b" stroke-width="1.2" d="M1571 958 H1726"/><circle cx="1656" cy="958" r="7" fill="#f4f5f7" stroke="#5b5f68" stroke-width="1.3"/></svg>
<div class="t " style="left:-2.8px;top:947.8px;letter-spacing:.6px">值=0</div>
<div class="t " style="left:39.6px;top:947.8px;letter-spacing:.6px">计数=50</div>
<div class="t " style="left:106.6px;top:947.8px;letter-spacing:.6px">求和=0</div>
<div class="t " style="left:1478px;top:947.8px;letter-spacing:.4px">100%</div>
</div></body></html>
